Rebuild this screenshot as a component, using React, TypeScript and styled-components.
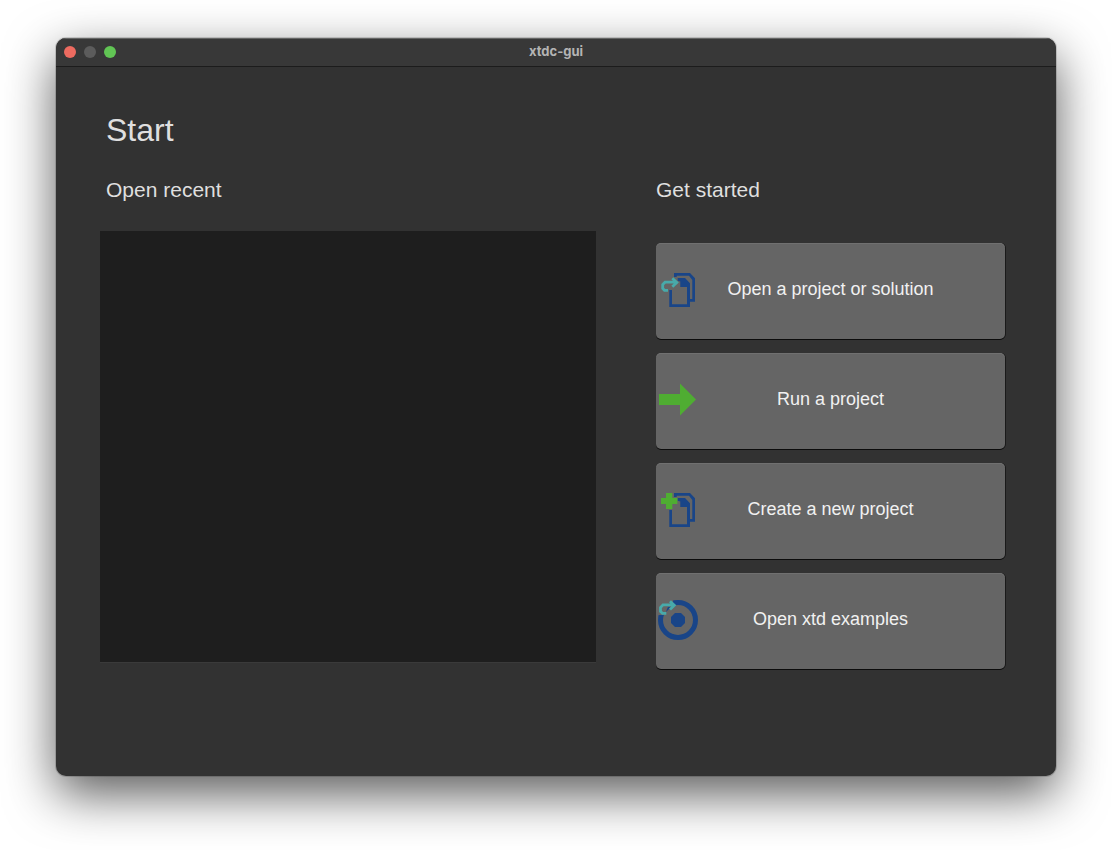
import React from 'react';
import styled, { createGlobalStyle } from 'styled-components';

const GlobalStyle = createGlobalStyle`
  *, *::before, *::after { box-sizing: border-box; }
  body {
    margin: 0;
    background: #ffffff;
    font-family: "Liberation Sans", Arial, sans-serif;
  }
`;

const Desktop = styled.div`
  display: flex;
  min-height: 100vh;
  padding: 38px 56px 74px;
`;

const Window = styled.main`
  flex: 1;
  display: flex;
  flex-direction: column;
  overflow: hidden;
  border-radius: 10px;
  background: #323232;
  box-shadow:
    0 0 0 1px rgba(0, 0, 0, 0.15),
    0 18px 50px rgba(0, 0, 0, 0.65);
`;

const TitleBar = styled.header`
  display: grid;
  grid-template-columns: 1fr auto 1fr;
  align-items: center;
  height: 29px;
  padding: 0 8px;
  border-bottom: 1px solid #1c1c1c;
  background: #383838;
  box-shadow: inset 0 1px 0 #656665;
`;

const WindowControls = styled.div`
  display: flex;
  gap: 8px;
`;

const WindowControl = styled.button<{ $color: string }>`
  width: 12px;
  height: 12px;
  padding: 0;
  border: 0;
  border-radius: 50%;
  background: ${({ $color }) => $color};
`;

const WindowTitle = styled.div`
  padding-bottom: 2px;
  color: #b4b4b4;
  font: 700 13px/16px Inter, "Liberation Sans", sans-serif;
`;

const Content = styled.div`
  flex: 1;
  padding: 43px 51px 106px 44px;
`;

const PageTitle = styled.h1`
  margin: 0 0 20px;
  padding-left: 6px;
  color: #dfdfdf;
  font-size: 32px;
  font-weight: 400;
  line-height: 40px;
`;

const Columns = styled.div`
  display: grid;
  grid-template-columns: minmax(0, 496fr) minmax(0, 349fr);
  gap: 60px;
`;

const Column = styled.section`
  display: flex;
  flex-direction: column;
`;

const SectionTitle = styled.h2<{ $inset?: boolean }>`
  margin: 0;
  padding-left: ${({ $inset }) => ($inset ? '6px' : '0')};
  color: #dfdfdf;
  font-size: 21px;
  font-weight: 400;
  line-height: 40px;
`;

const RecentList = styled.ul`
  flex: 1;
  margin: 21px 0 7px;
  padding: 0;
  list-style: none;
  background: #1e1e1e;
  box-shadow: 0 1px 0 #3a3a3a;
`;

const Actions = styled.div`
  display: flex;
  flex-direction: column;
  gap: 14px;
  margin-top: 33px;
`;

const ActionButton = styled.button`
  display: grid;
  grid-template-columns: 40px 1fr 40px;
  align-items: center;
  height: 96px;
  padding: 0 2px 2px;
  border: 0;
  border-radius: 5px;
  background: #656565;
  box-shadow: inset 0 1px 0 #707070, 0 1px 0 #0c0c0c, 1px 0 0 #1a1a1a;
  color: #f1f1f1;
  font: 400 18px/24px "Liberation Sans", Arial, sans-serif;
`;

const ActionLabel = styled.span`
  padding-bottom: 2px;
`;

const Icon = styled.svg`
  display: block;
  width: 40px;
  height: 40px;
`;

const BLUE = '#194588';
const GREEN = '#4fad32';
const TEAL = '#48aaaa';

const Documents = () => (
  <g fill={BLUE}>
    <path d="M16 3h16l5 5.300V31.700h-5V29h2.300V10L31 5.700H18.700V7H16z" />
    <path d="M19.700 8H27l5 5.300V37H11.300V20H14v14.300h15V17h-6.700v-5.500l-2.600-.8z" />
  </g>
);

const OpenProjectIcon = () => (
  <Icon viewBox="0 0 40 40" aria-hidden="true">
    <Documents />
    <path
      d="M10 20.300H6.500L4.700 18.500V14.500L7 12.200H18M14.300 8.300l4.500 4.200-4.500 4.200"
      fill="none"
      stroke={TEAL}
      strokeWidth="2.800"
    />
  </Icon>
);

const RunIcon = () => (
  <Icon viewBox="0 0 40 40" aria-hidden="true">
    <path d="M1 14h21V3.500l16 16-16 16V25H1z" fill={GREEN} />
  </Icon>
);

const NewProjectIcon = () => (
  <Icon viewBox="0 0 40 40" aria-hidden="true">
    <Documents />
    <path d="M8 3h6.300v5h5v6h-5v5H8v-5H3V8h5z" fill={GREEN} />
  </Icon>
);

const ExamplesIcon = () => (
  <Icon viewBox="0 0 40 40" aria-hidden="true">
    <circle cx="20" cy="20" r="17.500" fill="none" stroke={BLUE} strokeWidth="5" />
    <path d="M0 0h15v5L8 15H0z" fill="#656565" />
    <path d="M17 13h6l4 4v6l-4 4h-6l-4-4v-6z" fill={BLUE} />
    <path d="M9 9l1-2h4l-3 2-3 3z" fill={BLUE} />
    <path
      d="M8.300 13.300H4.500L2.500 11.500V7.500L5 4.900H16M12 1.200l4.300 4.100L12 9.600"
      fill="none"
      stroke={TEAL}
      strokeWidth="2.800"
    />
  </Icon>
);

const actions = [
  { label: 'Open a project or solution', icon: OpenProjectIcon },
  { label: 'Run a project', icon: RunIcon },
  { label: 'Create a new project', icon: NewProjectIcon },
  { label: 'Open xtd examples', icon: ExamplesIcon },
];

export default function App() {
  return (
    <>
      <GlobalStyle />
      <Desktop>
        <Window>
          <TitleBar>
            <WindowControls>
              <WindowControl type="button" $color="#ed6b60" aria-label="Close" />
              <WindowControl type="button" $color="#5c5c5c" aria-label="Minimize" />
              <WindowControl type="button" $color="#61c554" aria-label="Zoom" />
            </WindowControls>
            <WindowTitle>xtdc-gui</WindowTitle>
          </TitleBar>
          <Content>
            <PageTitle>Start</PageTitle>
            <Columns>
              <Column>
                <SectionTitle $inset id="recent">Open recent</SectionTitle>
                <RecentList aria-labelledby="recent" />
              </Column>
              <Column>
                <SectionTitle>Get started</SectionTitle>
                <Actions>
                  {actions.map(({ label, icon: ActionIcon }) => (
                    <ActionButton type="button" key={label}>
                      <ActionIcon />
                      <ActionLabel>{label}</ActionLabel>
                    </ActionButton>
                  ))}
                </Actions>
              </Column>
            </Columns>
          </Content>
        </Window>
      </Desktop>
    </>
  );
}
